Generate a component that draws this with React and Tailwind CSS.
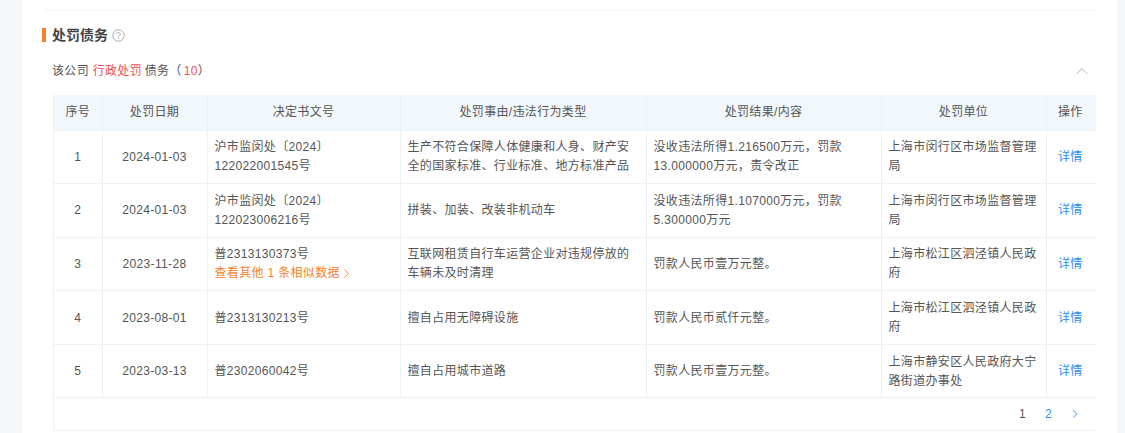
import { ChevronUp, ChevronRight } from 'lucide-react';

const rows = [
  { no: 1, date: '2024-01-03', doc: ['沪市监闵处〔2024〕', '122022001545号'], reason: '生产不符合保障人体健康和人身、财产安全的国家标准、行业标准、地方标准产品', result: '没收违法所得1.216500万元，罚款13.000000万元，责令改正', org: '上海市闵行区市场监督管理局' },
  { no: 2, date: '2024-01-03', doc: ['沪市监闵处〔2024〕', '122023006216号'], reason: '拼装、加装、改装非机动车', result: '没收违法所得1.107000万元，罚款5.300000万元', org: '上海市闵行区市场监督管理局' },
  { no: 3, date: '2023-11-28', doc: ['普2313130373号'], more: true, reason: '互联网租赁自行车运营企业对违规停放的车辆未及时清理', result: '罚款人民币壹万元整。', org: '上海市松江区泗泾镇人民政府' },
  { no: 4, date: '2023-08-01', doc: ['普2313130213号'], reason: '擅自占用无障碍设施', result: '罚款人民币贰仟元整。', org: '上海市松江区泗泾镇人民政府' },
  { no: 5, date: '2023-03-13', doc: ['普2302060042号'], reason: '擅自占用城市道路', result: '罚款人民币壹万元整。', org: '上海市静安区人民政府大宁路街道办事处' },
];

const heads = [
  ['序号', 'w-[48px]'],
  ['处罚日期', 'w-[105px]'],
  ['决定书文号', 'w-[193px]'],
  ['处罚事由/违法行为类型', 'w-[246px]'],
  ['处罚结果/内容', 'w-[235px]'],
  ['处罚单位', 'w-[165px]'],
  ['操作', 'w-[50px] last:pr-[2px]'],
];

const cell = 'border-r border-b border-[#eef1f4] last:border-r-0 px-[7px] pt-[1px] align-middle';

export default function App() {
  return (
    <div className="h-[433px] w-[1125px] overflow-hidden bg-[#f5f6f7] pl-[22px] pr-[8px] text-[12px] tracking-[0.33px] leading-[19px] text-[#555] font-['Liberation_Sans','Noto_Sans_CJK_SC',sans-serif]">
      <div className="h-full bg-white pl-[20px] pr-[20px] pt-[9px]">
        <div className="ml-[3px] h-[2px] bg-[#f6f7f8]" />
        <div className="mt-[14px] flex h-[20px] items-center">
          <span className="h-[14px] w-[4px] bg-[#f5822a]" />
          <h2 className="ml-[6px] text-[14px] tracking-normal font-bold text-[#444]">处罚债务</h2>
          <svg className="ml-[4px] mt-[1px]" width="13" height="13" viewBox="0 0 13 13" fill="none" stroke="#aaa">
            <circle cx="6.5" cy="6.5" r="5.7" />
            <path d="M4.8 5.2c0-2.2 3.5-2.2 3.5-.1 0 1.3-1.8 1.3-1.8 2.7" />
            <path d="M6.5 9v1" />
          </svg>
        </div>
        <div className="mt-[16px] ml-[10px] flex h-[20px] items-center justify-between pr-[5px]">
          <div>
            该公司 <span className="text-[#f2504f]">行政处罚</span> <span className="ml-[-1px]">债务（</span><span className="ml-[2px] text-[#f2504f]">10</span>）
          </div>
          <ChevronUp size={20} strokeWidth={1.1} className="text-[#aaa]" />
        </div>
        <div className="mt-[14px] ml-[11px] w-[1042px] border-b border-l border-[#eef1f4]">
          <table className="w-full table-fixed border-collapse">
            <thead>
              <tr className="h-[35px] bg-[#f1f7fb]">
                {heads.map(([t, w]) => (
                  <th key={t} className={`${w} border-r border-b border-[#eef1f4] last:border-r-0 text-center font-normal text-[#555]`}>{t}</th>
                ))}
              </tr>
            </thead>
            <tbody>
              {rows.map((r) => (
                <tr key={r.no} className="h-[53.6px]">
                  <td className={`${cell} text-center`}>{r.no}</td>
                  <td className={`${cell} text-center`}>{r.date}</td>
                  <td className={cell}>
                    {r.doc.map((d) => <div key={d}>{d}</div>)}
                    {r.more && (
                      <div className="flex items-center text-[#f5822a]">
                        查看其他 1 条相似数据
                        <ChevronRight size={15} strokeWidth={1.5} className="ml-[-1px]" />
                      </div>
                    )}
                  </td>
                  <td className={cell}>{r.reason}</td>
                  <td className={cell}>{r.result}</td>
                  <td className={cell}>{r.org}</td>
                  <td className={`${cell} pr-[9px] text-center text-[#2a8ff0]`}>详情</td>
                </tr>
              ))}
            </tbody>
          </table>
          <div className="flex h-[32px] items-center justify-end pr-[13px]">
            <span className="text-[#555]">1</span>
            <span className="ml-[19px] text-[#2a8ff0]">2</span>
            <ChevronRight size={14} strokeWidth={1.6} className="ml-[16px] text-[#2a8ff0]" />
          </div>
        </div>
      </div>
    </div>
  );
}
